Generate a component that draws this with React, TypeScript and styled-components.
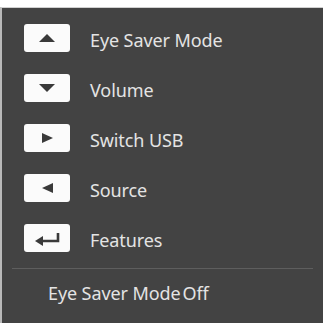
import React from "react";
import styled, { createGlobalStyle } from "styled-components";

const Global = createGlobalStyle`
  html, body { margin: 0; padding: 0; background: #ffffff; }
  body { width: 323px; height: 323px; overflow: hidden; font-family: "Noto Sans", "Open Sans", sans-serif; }
`;

const Page = styled.div`
  padding-top: 7px;
  height: 323px;
  box-sizing: border-box;
`;

const Panel = styled.div`
  height: 316px;
  box-sizing: border-box;
  background: #434343;
  border-top: 1px solid #d0d0d0;
  border-left: 2px solid #b9b9b9;
  padding-top: 16px;
  display: flex;
  flex-direction: column;
`;

const List = styled.div`
  display: flex;
  flex-direction: column;
  gap: 22px;
  padding-left: 22px;
`;

const Row = styled.div`
  display: flex;
  align-items: center;
  height: 28px;
  gap: 20px;
`;

const Key = styled.div`
  width: 46px;
  height: 28px;
  background: #fbfbfb;
  border-radius: 3px;
  display: flex;
  align-items: center;
  justify-content: center;
  svg { display: block; }
`;

const Label = styled.span`
  color: #e4e4e4;
  font-size: 18px;
  line-height: 28px;
  padding-top: 3px;
  letter-spacing: -0.1px;
`;

const Divider = styled.div`
  margin: 16px 10px 0 10px;
  height: 1px;
  background: #5e5e5e;
`;

const Status = styled.div`
  color: #e4e4e4;
  font-size: 18px;
  padding-left: 46px;
  margin-top: 12px;
  display: flex;
  gap: 2px;
  letter-spacing: -0.1px;
`;

const ICON = "#3a3a3a";

const UpIcon = () => (
  <svg width="46" height="28" viewBox="0 0 46 28">
    <polygon points="15,18 31,18 23,10" fill={ICON} />
  </svg>
);
const DownIcon = () => (
  <svg width="46" height="28" viewBox="0 0 46 28">
    <polygon points="15,10 31,10 23,18" fill={ICON} />
  </svg>
);
const RightIcon = () => (
  <svg width="46" height="28" viewBox="0 0 46 28">
    <polygon points="18,9 29,14 18,19" fill={ICON} />
  </svg>
);
const LeftIcon = () => (
  <svg width="46" height="28" viewBox="0 0 46 28">
    <polygon points="29,9 18,14 29,19" fill={ICON} />
  </svg>
);
const EnterIcon = () => (
  <svg width="46" height="28" viewBox="0 0 46 28">
    <path d="M34 9 V17 H18" stroke={ICON} strokeWidth="2.6" fill="none" />
    <polygon points="11,17 19,12 19,22" fill={ICON} />
  </svg>
);

const items: { icon: React.ReactNode; label: string }[] = [
  { icon: <UpIcon />, label: "Eye Saver Mode" },
  { icon: <DownIcon />, label: "Volume" },
  { icon: <RightIcon />, label: "Switch USB" },
  { icon: <LeftIcon />, label: "Source" },
  { icon: <EnterIcon />, label: "Features" },
];

export default function App() {
  return (
    <>
      <Global />
      <Page>
        <Panel>
          <List>
            {items.map((it) => (
              <Row key={it.label}>
                <Key>{it.icon}</Key>
                <Label>{it.label}</Label>
              </Row>
            ))}
          </List>
          <Divider />
          <Status>
            <span>Eye Saver Mode</span>
            <span>Off</span>
          </Status>
        </Panel>
      </Page>
    </>
  );
}
